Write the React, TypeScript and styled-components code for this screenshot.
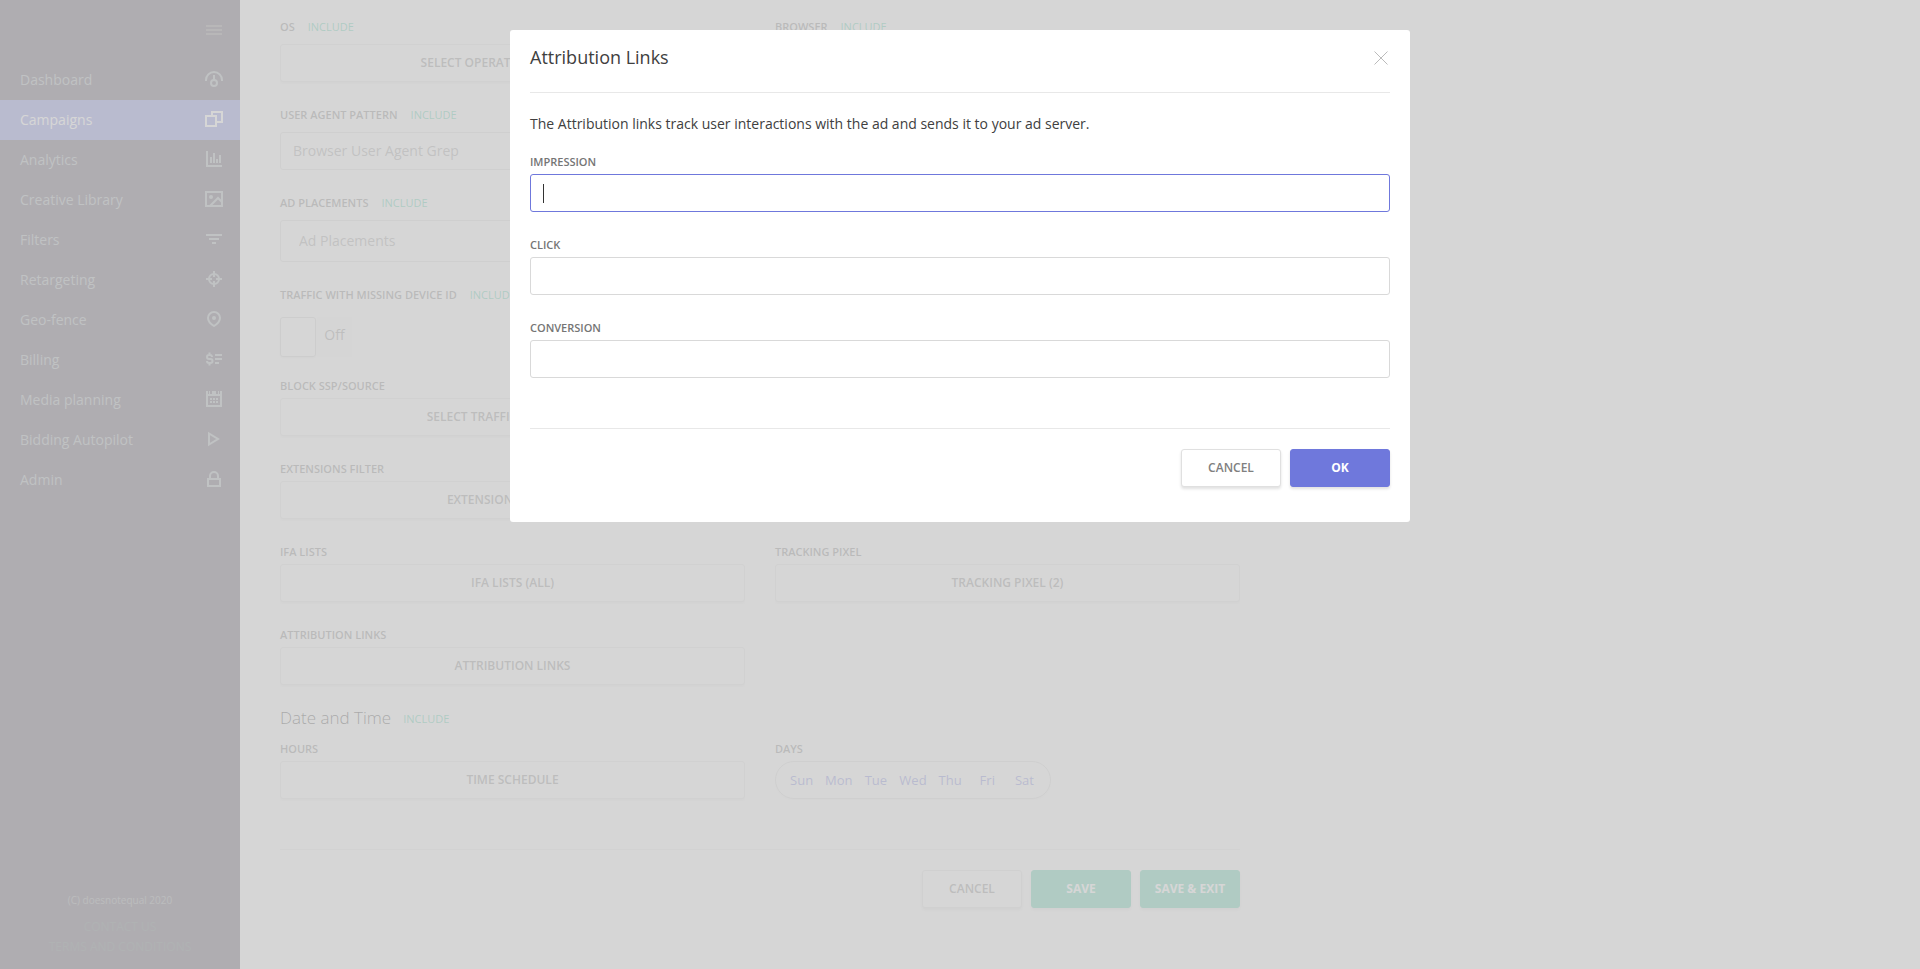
import React from "react";
import styled, { createGlobalStyle, css } from "styled-components";

const accent = "#6f78dc";
const green = "#40c79f";

const GlobalStyle = createGlobalStyle`
  * { box-sizing: border-box; }
  body {
    margin: 0;
    background: #fff;
    color: #333;
    font-family: "Open Sans", "Liberation Sans", sans-serif;
    font-size: 14px;
    line-height: 20px;
  }
  button, input, select { font-family: inherit; }
`;

const Page = styled.div`
  display: flex;
  min-height: 100vh;
`;

const Sidebar = styled.aside`
  display: flex;
  flex-direction: column;
  flex: none;
  width: 240px;
  padding-bottom: 12px;
  background: #3f3549;
`;

const MenuBar = styled.div`
  display: flex;
  justify-content: flex-end;
  align-items: center;
  height: 60px;
  padding-right: 17px;
`;

const MenuButton = styled.button`
  display: flex;
  padding: 0;
  border: 0;
  background: none;
  color: #68646c;
`;

const Icon = styled.svg`
  display: block;
  width: 18px;
  height: 16px;
  fill: none;
  stroke: currentColor;
  stroke-width: 2;

  .solid {
    fill: currentColor;
    stroke: none;
  }
`;

const NavLink = styled.a<{ $active?: boolean }>`
  display: flex;
  align-items: center;
  justify-content: space-between;
  height: 40px;
  padding: 0 17px 0 20px;
  color: ${(p) => (p.$active ? "#fff" : "#8f9ba0")};
  background: ${(p) => (p.$active ? accent : "transparent")};
  text-decoration: none;

  ${Icon} {
    margin-bottom: 2px;
  }
`;

const SidebarFooter = styled.footer`
  display: flex;
  flex-direction: column;
  align-items: center;
  margin-top: auto;
`;

const Copyright = styled.small`
  margin-bottom: 7px;
  color: #7b8084;
  font-size: 10px;
`;

const FooterLink = styled.a`
  color: #404c50;
  font-size: 12px;
  text-decoration: none;
`;

const Main = styled.main`
  flex: 1;
  padding: 19px 40px;
`;

const Form = styled.form`
  max-width: 960px;
`;

const Row = styled.div`
  display: grid;
  grid-template-columns: 1fr 1fr;
  column-gap: 30px;
  margin-bottom: 25px;
`;

const labelText = css`
  color: #757575;
  font-size: 11px;
  font-weight: 600;
  line-height: 15px;
`;

const FieldBox = styled.div`
  display: flex;
  flex-direction: column;
`;

const LabelLine = styled.div<{ $wide?: boolean }>`
  display: flex;
  gap: 13px;
  height: 15px;
  margin-bottom: ${(p) => (p.$wide ? 10 : 5)}px;
`;

const Label = styled.label`
  ${labelText}
`;

const Include = styled.a`
  color: ${green};
  font-size: 11px;
  font-weight: 400;
  line-height: 15px;
  text-decoration: none;
`;

const controlBox = css`
  width: 100%;
  height: 38px;
  border: 1px solid #d9d9d9;
  border-radius: 3px;
  background: #fff;
`;

const WideButton = styled.button`
  ${controlBox}
  padding: 0 0 2px;
  border-color: #e3e3e3;
  box-shadow: 0 2px 2px rgba(0, 0, 0, 0.06);
  color: #808080;
  font-size: 12px;
  font-weight: 600;
`;

const TextInput = styled.input<{ $roomy?: boolean }>`
  ${controlBox}
  height: ${(p) => (p.$roomy ? 42 : 38)}px;
  padding: 0 ${(p) => (p.$roomy ? 18 : 12)}px 1px;
  font-size: 14px;
  outline: none;

  &::placeholder {
    color: #999;
    opacity: 1;
  }

  &:focus {
    border-color: ${accent};
    caret-color: transparent;
  }
`;

const Toggle = styled.div`
  display: flex;
  gap: 1px;
  height: 41px;
  margin: 5px 0 -5px;
`;

const ToggleKnob = styled.button`
  width: 36px;
  height: 40px;
  border: 1px solid #d0d0d0;
  border-radius: 3px;
  background: #fff;
  box-shadow: 0 1px 2px rgba(0, 0, 0, 0.08);
`;

const ToggleState = styled.span`
  width: 35px;
  height: 40px;
  background: #fafafa;
  color: #888;
  line-height: 36px;
  text-align: center;
`;

const SectionTitle = styled.h2`
  display: flex;
  align-items: center;
  gap: 12px;
  height: 16px;
  margin: 0 0 15px;
  color: #222;
  font-size: 17px;
  font-weight: 300;
`;

const Days = styled.div`
  display: flex;
  width: 276px;
  height: 38px;
  padding: 0 7px;
  border: 1px solid #d9d9d9;
  border-radius: 19px;
  box-shadow: 0 1px 2px rgba(0, 0, 0, 0.06);
`;

const Day = styled.button`
  flex: 1;
  padding: 0;
  border: 0;
  background: none;
  color: ${accent};
  font-size: 13px;
`;

const Actions = styled.div`
  display: flex;
  justify-content: flex-end;
  gap: 9px;
  margin-top: 50px;
  padding-top: 20px;
  border-top: 1px solid #e8e8e8;
`;

const tones = {
  plain: css`
    border: 1px solid #e0e0e0;
    background: #fff;
    color: #808080;
    font-weight: 600;
  `,
  green: css`
    border: 1px solid ${green};
    background: ${green};
    color: #fff;
    font-weight: 700;
  `,
  accent: css`
    border: 1px solid ${accent};
    background: ${accent};
    color: #fff;
    font-weight: 700;
  `,
};

const ActionButton = styled.button<{ $tone: keyof typeof tones }>`
  width: 100px;
  height: 38px;
  padding: 0 0 2px;
  border-radius: 3px;
  box-shadow: 0 2px 3px rgba(0, 0, 0, 0.12);
  font-size: 12px;
  ${(p) => tones[p.$tone]}
`;

const Overlay = styled.div`
  position: fixed;
  inset: 0;
  display: flex;
  justify-content: center;
  align-items: flex-start;
  padding: 30px;
  background: rgba(204, 204, 204, 0.8);
`;

const Dialog = styled.section`
  width: 100%;
  max-width: 900px;
  padding: 0 20px 35px;
  border-radius: 3px;
  background: #fff;
`;

const DialogHeader = styled.header`
  display: flex;
  align-items: center;
  justify-content: space-between;
  padding: 15px 0 23px;
  border-bottom: 1px solid #e8e8e8;
`;

const DialogTitle = styled.h1`
  margin: 0;
  color: #404040;
  font-size: 18px;
  font-weight: 400;
  line-height: 24px;
`;

const CloseButton = styled.button`
  display: flex;
  padding: 1px 2px 0;
  border: 0;
  background: none;
  color: #bbb;
`;

const Intro = styled.p`
  margin: 21px 0 20px;
  color: #404040;
`;

const DialogField = styled.div`
  margin-bottom: 25px;
`;

const CaretBox = styled.div`
  position: relative;
  display: flex;

  &:focus-within::after {
    content: "";
    position: absolute;
    top: 10px;
    left: 13px;
    width: 1px;
    height: 19px;
    background: #333;
  }
`;

const icons: Record<string, React.ReactNode> = {
  menu: <path d="M1 4h16M1 8h16M1 12h16" />,
  dashboard: (
    <>
      <path d="M1 10V9a8 8 0 0 1 16 0v1M9 4v5" />
      <circle cx="9" cy="12" r="3" />
    </>
  ),
  campaigns: <path d="M1 5h10v10H1zM7 5V1h10v10h-6" />,
  analytics: (
    <>
      <path d="M2 0v15h15" />
      <path className="solid" d="M5 6h2v6H5zM8 2h2v10H8zM11 8h2v4h-2zM14 4h2v8h-2z" />
    </>
  ),
  library: (
    <>
      <path d="M1 1h16v14H1zM5 15l8-8 4 4" />
      <circle className="solid" cx="6" cy="6" r="2" />
    </>
  ),
  filters: <path d="M1 4h16M4 8h10M7 12h4" />,
  retargeting: (
    <>
      <circle cx="9" cy="8" r="5" />
      <path d="M9 0v6M9 10v6M1 8h6M11 8h6" />
    </>
  ),
  geofence: (
    <>
      <path d="M9 15C5 12.500 3 10 3 7a6 6 0 0 1 12 0c0 3-2 5.500-6 8z" />
      <circle className="solid" cx="9" cy="7" r="2" />
    </>
  ),
  billing: (
    <path d="M7 6V5.500A2 2 0 0 0 5 4H4a2 2 0 0 0 0 4h1.500a2 2 0 0 1 0 4H4a2 2 0 0 1-2-2M4.500 1.500V4M4.500 12v2.500M10 4h7M10 8h7M10 12h4" />
  ),
  planning: (
    <>
      <path d="M2 0v15h14V0" />
      <path
        className="solid"
        d="M2 3h14v2H2zM4 0h1v3H4zM7 0h4v3H7zM13 0h1v3h-1zM5 7h2v2H5zM8 7h2v2H8zM11 7h2v2h-2zM5 10h2v2H5zM8 10h2v2H8zM11 10h2v2h-2z"
      />
    </>
  ),
  autopilot: <path d="M4 2.500v11L13 8z" />,
  admin: <path d="M3 8h12v7H3zM5 8V5a4 4 0 0 1 8 0v3" />,
};

const navItems = [
  ["Dashboard", "dashboard"],
  ["Campaigns", "campaigns"],
  ["Analytics", "analytics"],
  ["Creative Library", "library"],
  ["Filters", "filters"],
  ["Retargeting", "retargeting"],
  ["Geo-fence", "geofence"],
  ["Billing", "billing"],
  ["Media planning", "planning"],
  ["Bidding Autopilot", "autopilot"],
  ["Admin", "admin"],
];

const days = ["Sun", "Mon", "Tue", "Wed", "Thu", "Fri", "Sat"];

function Glyph({ name }: { name: string }) {
  return (
    <Icon viewBox="0 0 18 16" aria-hidden="true">
      {icons[name]}
    </Icon>
  );
}

type FieldProps = {
  id: string;
  label: string;
  include?: boolean;
  children: React.ReactNode;
};

function Field({ id, label, include, children }: FieldProps) {
  return (
    <FieldBox>
      <LabelLine $wide={include}>
        <Label htmlFor={id}>{label}</Label>
        {include && <Include href="#">INCLUDE</Include>}
      </LabelLine>
      {children}
    </FieldBox>
  );
}

type ButtonFieldProps = { id: string; label: string; text: string; include?: boolean };

function ButtonField({ text, ...field }: ButtonFieldProps) {
  return (
    <Field {...field}>
      <WideButton type="button" id={field.id}>
        {text}
      </WideButton>
    </Field>
  );
}

function LinksDialog() {
  return (
    <Overlay>
      <Dialog role="dialog" aria-modal="true" aria-labelledby="dialog-title">
        <DialogHeader>
          <DialogTitle id="dialog-title">Attribution Links</DialogTitle>
          <CloseButton type="button" aria-label="Close">
            <svg width="14" height="14" viewBox="0 0 14 14" stroke="currentColor" fill="none">
              <path d="M0.500 0.500l13 13M13.500 0.500l-13 13" />
            </svg>
          </CloseButton>
        </DialogHeader>
        <Intro>
          The Attribution links track user interactions with the ad and sends it to your ad server.
        </Intro>
        {["Impression", "Click", "Conversion"].map((name, i) => (
          <DialogField key={name}>
            <Field id={`link-${name}`} label={name.toUpperCase()}>
              <CaretBox>
                <TextInput id={`link-${name}`} type="text" autoFocus={i === 0} />
              </CaretBox>
            </Field>
          </DialogField>
        ))}
        <Actions>
          <ActionButton type="button" $tone="plain">CANCEL</ActionButton>
          <ActionButton type="button" $tone="accent">OK</ActionButton>
        </Actions>
      </Dialog>
    </Overlay>
  );
}

export default function App() {
  return (
    <>
      <GlobalStyle />
      <Page>
        <Sidebar>
          <MenuBar>
            <MenuButton type="button" aria-label="Toggle menu">
              <Glyph name="menu" />
            </MenuButton>
          </MenuBar>
          <nav>
            {navItems.map(([label, icon]) => (
              <NavLink key={icon} href="#" $active={icon === "campaigns"}>
                {label}
                <Glyph name={icon} />
              </NavLink>
            ))}
          </nav>
          <SidebarFooter>
            <Copyright>(C) doesnotequal 2020</Copyright>
            <FooterLink href="#">CONTACT US</FooterLink>
            <FooterLink href="#">TERMS AND CONDITIONS</FooterLink>
          </SidebarFooter>
        </Sidebar>
        <Main>
          <Form>
            <Row>
              <ButtonField id="os" label="OS" text="SELECT OPERATING SYSTEMS (2)" include />
              <ButtonField id="browser" label="BROWSER" text="SELECT BROWSER" include />
            </Row>
            <Row>
              <Field id="agent" label="USER AGENT PATTERN" include>
                <TextInput id="agent" type="text" placeholder="Browser User Agent Grep" />
              </Field>
            </Row>
            <Row>
              <Field id="placements" label="AD PLACEMENTS" include>
                <TextInput id="placements" type="text" placeholder="Ad Placements" $roomy />
              </Field>
            </Row>
            <Row>
              <Field id="device" label="TRAFFIC WITH MISSING DEVICE ID" include>
                <Toggle>
                  <ToggleKnob type="button" id="device" role="switch" aria-checked="false" />
                  <ToggleState>Off</ToggleState>
                </Toggle>
              </Field>
            </Row>
            <Row>
              <ButtonField id="ssp" label="BLOCK SSP/SOURCE" text="SELECT TRAFFIC SOURCES (10)" />
            </Row>
            <Row>
              <ButtonField id="ext" label="EXTENSIONS FILTER" text="EXTENSIONS FILTER (2)" />
            </Row>
            <Row>
              <ButtonField id="ifa" label="IFA LISTS" text="IFA LISTS (ALL)" />
              <ButtonField id="pixel" label="TRACKING PIXEL" text="TRACKING PIXEL (2)" />
            </Row>
            <Row>
              <ButtonField id="links" label="ATTRIBUTION LINKS" text="ATTRIBUTION LINKS" />
            </Row>
            <SectionTitle>
              Date and Time <Include href="#">INCLUDE</Include>
            </SectionTitle>
            <Row>
              <ButtonField id="hours" label="HOURS" text="TIME SCHEDULE" />
              <Field id="day-Sun" label="DAYS">
                <Days>
                  {days.map((day) => (
                    <Day key={day} id={`day-${day}`} type="button">
                      {day}
                    </Day>
                  ))}
                </Days>
              </Field>
            </Row>
            <Actions>
              <ActionButton type="button" $tone="plain">CANCEL</ActionButton>
              <ActionButton type="button" $tone="green">SAVE</ActionButton>
              <ActionButton type="button" $tone="green">SAVE &amp; EXIT</ActionButton>
            </Actions>
          </Form>
        </Main>
      </Page>
      <LinksDialog />
    </>
  );
}
